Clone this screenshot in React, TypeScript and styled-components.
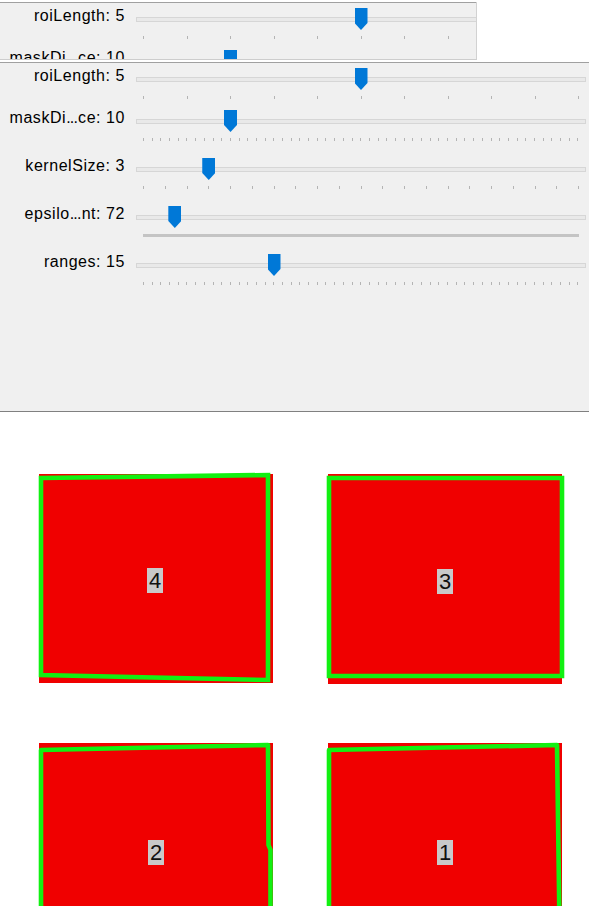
import React from "react";
import styled, { createGlobalStyle } from "styled-components";

const GlobalStyle = createGlobalStyle`
  html, body { margin: 0; padding: 0; background: #ffffff; }
  body {
    width: 589px;
    height: 906px;
    overflow: hidden;
    font-family: "Liberation Sans", Arial, sans-serif;
  }
`;

const Page = styled.div`
  display: flex;
  flex-direction: column;
  width: 589px;
  height: 906px;
  overflow: hidden;
  background: #ffffff;
`;

const GhostFrame = styled.div`
  flex: none;
  margin-top: 2px;
  width: 476px;
  height: 57px;
  overflow: hidden;
  border-right: 1px solid #d2d2d2;
  border-bottom: 1px solid #cdcdcd;
`;

const Panel = styled.div<{ $main?: boolean }>`
  flex: none;
  box-sizing: border-box;
  width: 589px;
  height: ${(p) => (p.$main ? "350px" : "57px")};
  margin-top: ${(p) => (p.$main ? "2px" : "0")};
  padding-top: 5px;
  display: flex;
  flex-direction: column;
  background: #f0f0f0;
  border-top: 1px solid #a0a0a0;
  border-bottom: ${(p) => (p.$main ? "1px solid #808080" : "none")};
`;

const Row = styled.div<{ $h: number }>`
  display: grid;
  grid-template-columns: 136px 450px;
  height: ${(p) => p.$h}px;
  flex: none;
`;

const Label = styled.div`
  box-sizing: border-box;
  padding-right: 11px;
  margin-top: -2px;
  text-align: right;
  white-space: nowrap;
  font-size: 16px;
  line-height: 19px;
  letter-spacing: 0.55px;
  color: #000000;
`;

const Dots = styled.span`
  letter-spacing: -0.8px;
  margin-right: 1px;
`;

const SliderCol = styled.div`
  display: flex;
  flex-direction: column;
`;

const Track = styled.div`
  position: relative;
  box-sizing: border-box;
  height: 22px;
  padding-top: 9px;
`;

const Groove = styled.div`
  box-sizing: border-box;
  height: 5px;
  border: 1px solid #d6d6d6;
  background: #e9e9e9;
`;

const Handle = styled.div`
  position: absolute;
  top: 0;
  width: 13px;
  height: 22px;
  background: #0078d7;
  clip-path: polygon(0 0, 100% 0, 100% 68%, 50% 100%, 0 68%);
`;

const Ticks = styled.div`
  display: flex;
  justify-content: space-between;
  margin: 6px 7px 0 7px;
  height: 3px;
`;

const Tick = styled.div`
  width: 1px;
  height: 3px;
  background: #b4b4b4;
`;

const DenseTicks = styled.div`
  margin: 6px 7px 0 7px;
  height: 3px;
  background: #c4c4c4;
`;

const Canvas = styled.svg`
  display: block;
  flex: none;
`;

type SliderDef = {
  name: React.ReactNode;
  value: number;
  max: number;
};

const sliders: SliderDef[] = [
  { name: "roiLength: 5", value: 5, max: 10 },
  { name: (<>maskDi<Dots>...</Dots>ce: 10</>), value: 10, max: 50 },
  { name: "kernelSize: 3", value: 3, max: 20 },
  { name: (<>epsilo<Dots>...</Dots>nt: 72</>), value: 72, max: 1000 },
  { name: "ranges: 15", value: 15, max: 50 },
];

const SPAN = 435;

function Slider({ value, max }: { value: number; max: number }) {
  const left = 7 + (value / max) * SPAN - 6;
  const dense = max > 200;
  return (
    <SliderCol>
      <Track>
        <Groove />
        <Handle style={{ left: `${left}px` }} />
      </Track>
      {dense ? (
        <DenseTicks />
      ) : (
        <Ticks>
          {Array.from({ length: max + 1 }, (_, i) => (
            <Tick key={i} />
          ))}
        </Ticks>
      )}
    </SliderCol>
  );
}

function Trackbars({ main, rows }: { main?: boolean; rows: number }) {
  return (
    <Panel $main={main}>
      {sliders.slice(0, rows).map((s, i) => (
        <Row key={i} $h={i === 0 ? 42 : 48}>
          <Label>{s.name}</Label>
          <Slider value={s.value} max={s.max} />
        </Row>
      ))}
    </Panel>
  );
}

const RED = "#f00000";
const GREEN = "#12f012";
const TAG = "#c9c9c9";

type Blob = {
  rect: [number, number, number, number];
  outline: string;
  closed: boolean;
  tag: [number, number];
  text: string;
};

const blobs: Blob[] = [
  {
    rect: [39, 474, 234, 209],
    outline: "41,478 268,475 268,680 41,675",
    closed: true,
    tag: [147, 568],
    text: "4",
  },
  {
    rect: [328, 474, 234, 210],
    outline: "329,478 562,478 562,676 329,676",
    closed: true,
    tag: [437, 569],
    text: "3",
  },
  {
    rect: [39, 743, 234, 200],
    outline: "41,960 41,750 268,745 268.5,845 270.5,850 270.5,960",
    closed: false,
    tag: [148, 840],
    text: "2",
  },
  {
    rect: [328, 743, 234, 200],
    outline: "329,960 329,750 557,745 560,960",
    closed: false,
    tag: [437, 840],
    text: "1",
  },
];

function ImageView() {
  return (
    <Canvas width={589} height={494} viewBox="0 412 589 494">
      <rect x={0} y={412} width={589} height={494} fill="#ffffff" />
      {blobs.map((b, i) => (
        <g key={i}>
          <rect x={b.rect[0]} y={b.rect[1]} width={b.rect[2]} height={b.rect[3]} fill={RED} />
          {b.closed ? (
            <polygon
              points={b.outline}
              fill="none"
              stroke={GREEN}
              strokeWidth={4.6}
              strokeLinejoin="miter"
            />
          ) : (
            <polyline
              points={b.outline}
              fill="none"
              stroke={GREEN}
              strokeWidth={4.6}
              strokeLinejoin="round"
            />
          )}
          <rect x={b.tag[0]} y={b.tag[1]} width={16} height={25} fill={TAG} />
          <text
            x={b.tag[0] + 8}
            y={b.tag[1] + 20}
            textAnchor="middle"
            fontFamily="'Liberation Sans', Arial, sans-serif"
            fontSize={22}
            fontWeight={300}
            fill="#111111"
          >
            {b.text}
          </text>
        </g>
      ))}
    </Canvas>
  );
}

export default function App() {
  return (
    <Page>
      <GlobalStyle />
      <GhostFrame>
        <Trackbars rows={2} />
      </GhostFrame>
      <Trackbars main rows={sliders.length} />
      <ImageView />
    </Page>
  );
}
